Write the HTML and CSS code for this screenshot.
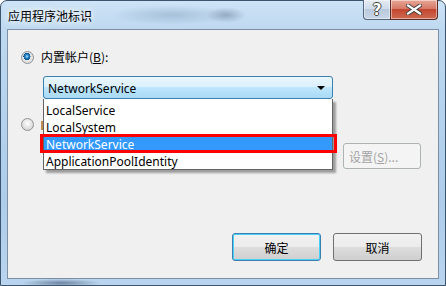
FILE: index.html
```html
<!DOCTYPE html>
<html lang="zh-CN">
  <head>
    <meta charset="UTF-8" />
    <title>应用程序池标识</title>
    <link rel="stylesheet" href="styles.css">
  </head>
  <body>
    <div class="window">
      <div class="titlebar">
        <span class="title">应用程序池标识</span>
        <div class="caption-buttons">
          <div class="cap-btn help"><span class="help-glyph">?</span></div>
          <div class="cap-btn close">
            <svg width="16" height="11" viewBox="0 0 16 11">
              <path d="M2 1.5 L14 9.5 M14 1.5 L2 9.5" stroke="#3b3b3b" stroke-width="4" stroke-linecap="square" fill="none"/>
              <path d="M2 1.5 L14 9.5 M14 1.5 L2 9.5" stroke="#ffffff" stroke-width="2.2" stroke-linecap="square" fill="none"/>
            </svg>
          </div>
        </div>
      </div>
      <div class="client">
        <div class="option">
          <span class="radio checked"></span>
          <label>内置帐户(<u>B</u>):</label>
        </div>
        <div class="combo-wrap">
          <div class="combo">
            <span>NetworkService</span>
            <span class="arrow"></span>
          </div>
          <ul class="dropdown">
            <li>LocalService</li>
            <li>LocalSystem</li>
            <li class="selected">NetworkService<span class="mark"></span></li>
            <li>ApplicationPoolIdentity</li>
          </ul>
        </div>
        <div class="option second">
          <span class="radio"></span>
          <span class="custom-label"></span>
        </div>
        <div class="custom-row">
          <button class="btn" disabled>设置(<u>S</u>)...</button>
        </div>
        <div class="footer">
          <button class="btn default">确定</button>
          <button class="btn">取消</button>
        </div>
      </div>
    </div>
  </body>
</html>
```
FILE: styles.css
```css
* {
  box-sizing: border-box;
}
body {
  margin: 0;
  background: #ffffff;
  font-family: "Noto Sans", "Noto Sans CJK SC", sans-serif;
  font-size: 12px;
  color: #000;
}
.window {
  width: 446px;
  height: 286px;
  border: 1px solid #3d546e;
  border-radius: 7px 7px 0 0;
  padding: 0 6px;
  background:
    radial-gradient(ellipse 60px 10px at 170px 14px, rgba(120, 150, 180, 0.4), transparent),
    radial-gradient(ellipse 20px 8px at 225px 14px, rgba(90, 110, 140, 0.45), transparent),
    radial-gradient(ellipse 40px 4px at 60px 282px, rgba(60, 80, 110, 0.6), transparent),
    linear-gradient(#cde3f6, #bdd8f0 30px, #adcdeb 200px, #b9d4ee);
}
.titlebar {
  height: 28px;
  display: flex;
  justify-content: space-between;
  align-items: flex-start;
}
.title {
  padding: 7px 0 0 1px;
  line-height: 16px;
  font-family: "Noto Sans CJK SC", sans-serif;
  text-shadow: 0 0 6px #fff, 0 0 10px #fff;
}
.caption-buttons {
  display: flex;
  margin-top: -1px;
  margin-right: 1px;
}
.cap-btn {
  height: 20px;
  border: 1px solid #53667d;
  border-top: none;
  display: flex;
  align-items: center;
  justify-content: center;
  box-shadow: inset 0 0 0 1px rgba(255, 255, 255, 0.45);
}
.help {
  width: 27px;
  border-right: none;
  border-radius: 0 0 0 4px;
  background: linear-gradient(#e4ecf5, #d0dcea 45%, #b9c9dc 50%, #c9d6e6);
}
.help-glyph {
  font-family: "DejaVu Sans", sans-serif;
  font-weight: bold;
  font-size: 15px;
  color: #fff;
  line-height: 16px;
  text-shadow: 1px 0 #444, -1px 0 #444, 0 1px #444, 0 -1px #444;
}
.close {
  width: 48px;
  border-color: #5a2c25;
  border-radius: 0 0 4px 0;
  background: linear-gradient(#e8a797, #d67a67 45%, #c34630 50%, #cf6a52);
}
.client {
  height: 250px;
  border: 1px solid #7c8fa5;
  background: #f0f0f0;
  display: flex;
  flex-direction: column;
}
.option {
  display: flex;
  align-items: center;
  height: 14px;
  margin-top: 20px;
  padding-left: 13px;
  gap: 7px;
}
.option label {
  font-family: "Noto Sans CJK SC", sans-serif;
  line-height: 14px;
}
.option.second {
  margin-top: 18px;
}
.custom-label {
  width: 2px;
  height: 9px;
  margin-top: 3px;
  background: #c08a50;
}
.radio {
  width: 13px;
  height: 13px;
  border-radius: 50%;
  border: 1px solid #8f9294;
  background: radial-gradient(circle at 50% 40%, #ffffff, #d9d9d9 70%, #cfcfcf);
  flex-shrink: 0;
}
.radio.checked {
  background:
    radial-gradient(circle at 45% 40%, #bfe8ff 0, #2f8fd1 1.5px, #0b4f87 3.5px, transparent 3.6px),
    radial-gradient(circle, #f4f4f4, #d4d4d4);
}
.combo-wrap {
  position: relative;
  margin: 12px 0 0 35px;
  width: 290px;
  height: 23px;
  z-index: 2;
}
.combo {
  height: 23px;
  border: 1px solid #3c7fb1;
  border-radius: 3px;
  background: linear-gradient(#eaf6fd, #d9f0fc 50%, #bee6fd 50%, #a7d9f5);
  display: flex;
  align-items: center;
  justify-content: space-between;
  padding: 1px 4px 0 4px;
}
.arrow {
  width: 0;
  height: 0;
  border-left: 4px solid transparent;
  border-right: 4px solid transparent;
  border-top: 4px solid #000;
  margin-right: 3px;
}
.dropdown {
  position: absolute;
  top: 23px;
  left: 0;
  width: 290px;
  margin: 0;
  padding: 2px 0 0 0;
  list-style: none;
  background: #fff;
  border: 1px solid #646464;
  border-top: none;
  box-shadow: 3px 3px 2px rgba(0, 0, 0, 0.35);
}
.dropdown li {
  height: 17px;
  line-height: 17px;
  padding: 1px 0 0 2px;
  position: relative;
}
.dropdown li.selected {
  background: #3399ff;
  color: #fff;
}
.mark {
  position: absolute;
  top: -1px;
  bottom: -1px;
  left: -4px;
  right: -5px;
  border: 3px solid #ff0000;
}
.custom-row {
  display: flex;
  justify-content: flex-end;
  margin: 12px 17px 0 0;
}
.btn {
  font-family: "Noto Sans CJK SC", sans-serif;
  font-size: 12px;
  border: 1px solid #707070;
  border-radius: 3px;
  background: linear-gradient(#f2f2f2, #ebebeb 50%, #dddddd 50%, #cfcfcf);
  color: #000;
  padding: 0;
}
.btn:disabled {
  width: 78px;
  height: 26px;
  border-color: #adb2b5;
  background: #f4f4f4;
  color: #a3a3a3;
  text-align: left;
  padding-left: 5px;
}
.footer {
  display: flex;
  justify-content: flex-end;
  gap: 12px;
  margin: 64px 16px 0 0;
}
.footer .btn {
  width: 89px;
  height: 28px;
}
.btn.default {
  border-color: #3c7fb1;
  box-shadow: inset 0 0 0 1px #48d0f8;
}
```
